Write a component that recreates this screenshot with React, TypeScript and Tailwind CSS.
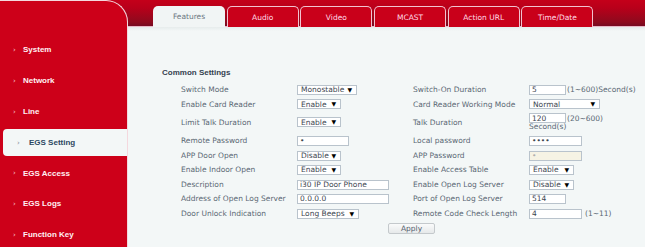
import React from "react";

const FONT = { fontFamily: '"DejaVu Sans", Verdana, sans-serif' };
const BOLD = { fontFamily: '"Liberation Sans", Arial, sans-serif' };

function Sel({ w, v }: { w: string; v: string }) {
  return (
    <div className={`${w} h-[10px] border border-[#b9c3cc] bg-white flex items-center justify-between pl-[3px] pr-[4px] text-[7.5px] leading-none text-[#3c4650]`}>
      <span>{v}</span>
      <span className="text-[6px] text-black leading-none">▼</span>
    </div>
  );
}

function Inp({ w, v, dis }: { w: string; v: string; dis?: boolean }) {
  return (
    <div className={`${w} h-[10px] border border-[#b9c3cc] ${dis ? "bg-[#f6f3e4] text-[#b0b0b0]" : "bg-white text-[#3c4650]"} flex items-center pl-[2px] text-[7.5px] leading-none`}>
      {v}
    </div>
  );
}

const Lbl = ({ t }: { t: string }) => (
  <div className="text-[7.5px] leading-none text-[#5a6774] flex items-center">{t}</div>
);

function Row({ h, children }: { h: string; children: React.ReactNode }) {
  return <div className={`${h} flex items-center`}>{children}</div>;
}

const side = ["System", "Network", "Line", "EGS Setting", "EGS Access", "EGS Logs", "Function Key"];
const tabs = ["Features", "Audio", "Video", "MCAST", "Action URL", "Time/Date"];

export default function App() {
  return (
    <div
      className="w-[645px] h-[247px] overflow-hidden flex bg-[linear-gradient(180deg,#c4001a_0px,#b8001a_8px,#8e0a1e_22px,#760a22_26px,#e8b8c8_26.5px,#e6ecec_27px,#f3f7f7_31px)]"
      style={FONT}
    >
      {/* sidebar */}
      <div className="w-[128px] shrink-0 flex flex-col">
        <div className="h-[5px]" />
        <div className="flex-1 bg-[#cd0019] rounded-tr-[22px] border-t border-r border-[#f4d8de] pt-[34px]">
          {side.map((s) =>
            s === "EGS Setting" ? (
              <div key={s} className="h-[30.8px] py-[2px] pl-[3px]">
                <div className="h-[26.8px] bg-[#f3f7f7] rounded-l-[4px] flex items-center pl-[14px]">
                  <span className="text-[7px] text-[#7a8896] w-[12px]">›</span>
                  <span className="text-[8px] font-bold text-[#2c4862]" style={BOLD}>{s}</span>
                </div>
              </div>
            ) : (
              <div key={s} className="h-[30.8px] flex items-center pl-[13px]">
                <span className="text-[7px] text-[#f6c8d2] w-[10px]">›</span>
                <span className="text-[8px] font-bold text-[#fff0f4]" style={BOLD}>{s}</span>
              </div>
            )
          )}
        </div>
      </div>

      {/* main */}
      <div className="flex-1 flex flex-col">
        <div className="h-[27px] flex items-end pl-[25px] gap-[1.7px]">
          {tabs.map((t, i) =>
            i === 0 ? (
              <div key={t} className="w-[72px] h-[21px] rounded-t-[5px] bg-[#f1f5f5] flex items-center justify-center pt-[1px] text-[7.5px] text-[#6c7782]">
                {t}
              </div>
            ) : (
              <div key={t} className="w-[72px] h-[21px] rounded-t-[5px] bg-[#c9001a] border border-b-0 border-[#f2c2d0] flex items-center justify-center pt-[1px] text-[7.5px] text-[#ffdce6]">
                {t}
              </div>
            )
          )}
        </div>

        <div className="pt-[41px]">
          <div className="pl-[34px] h-[10px] flex items-center text-[8px] font-bold text-[#33414f]" style={BOLD}>
            Common Settings
          </div>
          <div className="mt-[4.75px] pl-[53px] grid grid-cols-[116px_116px_116px_1fr]">
            {/* row1 */}
            <Row h="h-[14.5px]"><Lbl t="Switch Mode" /></Row>
            <Row h="h-[14.5px]"><Sel w="w-[60px]" v="Monostable" /></Row>
            <Row h="h-[14.5px]"><Lbl t="Switch-On Duration" /></Row>
            <Row h="h-[14.5px]">
              <Inp w="w-[37px]" v="5" />
              <span className="ml-[1px] text-[7.5px] text-[#5a6774]">(1~600)Second(s)</span>
            </Row>
            {/* row2 */}
            <Row h="h-[14px]"><Lbl t="Enable Card Reader" /></Row>
            <Row h="h-[14px]"><Sel w="w-[44px]" v="Enable" /></Row>
            <Row h="h-[14px]"><Lbl t="Card Reader Working Mode" /></Row>
            <Row h="h-[14px]"><Sel w="w-[71px]" v="Normal" /></Row>
            {/* row3 */}
            <Row h="h-[22px]"><Lbl t="Limit Talk Duration" /></Row>
            <Row h="h-[22px]"><Sel w="w-[44px]" v="Enable" /></Row>
            <Row h="h-[22px]"><Lbl t="Talk Duration" /></Row>
            <div className="h-[22px] flex flex-col justify-center">
              <div className="flex items-center">
                <Inp w="w-[37px]" v="120" />
                <span className="ml-[1px] text-[7.5px] leading-none text-[#5a6774]">(20~600)</span>
              </div>
              <span className="text-[7.5px] leading-[8px] text-[#5a6774]">Second(s)</span>
            </div>
            {/* row4 */}
            <Row h="h-[15px]"><Lbl t="Remote Password" /></Row>
            <Row h="h-[15px]"><Inp w="w-[52px]" v="•" /></Row>
            <Row h="h-[15px]"><Lbl t="Local password" /></Row>
            <Row h="h-[15px]"><Inp w="w-[53px]" v="••••" /></Row>
            {/* row5 */}
            <Row h="h-[14.5px]"><Lbl t="APP Door Open" /></Row>
            <Row h="h-[14.5px]"><Sel w="w-[44px]" v="Disable" /></Row>
            <Row h="h-[14.5px]"><Lbl t="APP Password" /></Row>
            <Row h="h-[14.5px]"><Inp w="w-[53px]" v="•" dis /></Row>
            {/* row6 */}
            <Row h="h-[14.5px]"><Lbl t="Enable Indoor Open" /></Row>
            <Row h="h-[14.5px]"><Sel w="w-[44px]" v="Enable" /></Row>
            <Row h="h-[14.5px]"><Lbl t="Enable Access Table" /></Row>
            <Row h="h-[14.5px]"><Sel w="w-[45px]" v="Enable" /></Row>
            {/* row7 */}
            <Row h="h-[14.5px]"><Lbl t="Description" /></Row>
            <Row h="h-[14.5px]"><Inp w="w-[92px]" v="i30 IP Door Phone" /></Row>
            <Row h="h-[14.5px]"><Lbl t="Enable Open Log Server" /></Row>
            <Row h="h-[14.5px]"><Sel w="w-[45px]" v="Disable" /></Row>
            {/* row8 */}
            <Row h="h-[14.5px]"><Lbl t="Address of Open Log Server" /></Row>
            <Row h="h-[14.5px]"><Inp w="w-[92px]" v="0.0.0.0" /></Row>
            <Row h="h-[14.5px]"><Lbl t="Port of Open Log Server" /></Row>
            <Row h="h-[14.5px]"><Inp w="w-[37px]" v="514" /></Row>
            {/* row9 */}
            <Row h="h-[14.5px]"><Lbl t="Door Unlock Indication" /></Row>
            <Row h="h-[14.5px]"><Sel w="w-[62px]" v="Long Beeps" /></Row>
            <Row h="h-[14.5px]"><Lbl t="Remote Code Check Length" /></Row>
            <Row h="h-[14.5px]">
              <Inp w="w-[53px]" v="4" />
              <span className="ml-[3px] text-[7.5px] text-[#5a6774]">(1~11)</span>
            </Row>
          </div>
          <div className="pl-[260px] mt-[2px]">
            <div className="w-[47px] h-[11px] border border-[#c4c9cc] rounded-[2px] bg-[linear-gradient(180deg,#fafbfb,#e6e9ea)] flex items-center justify-center text-[7.5px] leading-none text-[#55626f]">
              Apply
            </div>
          </div>
        </div>
      </div>
    </div>
  );
}
